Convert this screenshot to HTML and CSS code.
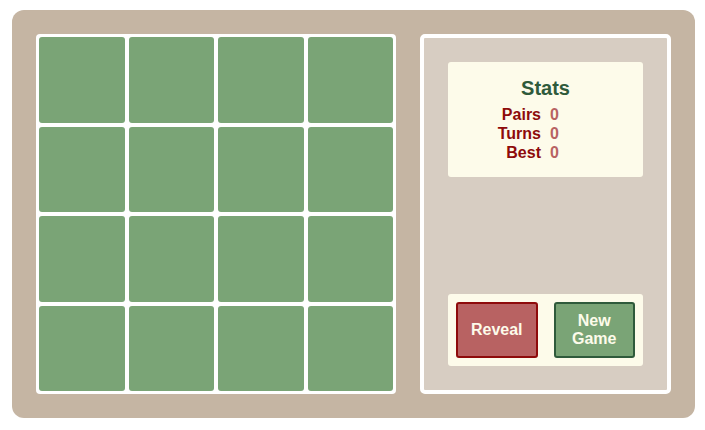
FILE: index.html
```html
<!DOCTYPE html>
<html>
<head>
<meta charset="utf-8">
<link rel="stylesheet" href="styles.css">
</head>
<body>
<div class="game">
  <div class="board">
    <div class="tile"></div><div class="tile"></div><div class="tile"></div><div class="tile"></div>
    <div class="tile"></div><div class="tile"></div><div class="tile"></div><div class="tile"></div>
    <div class="tile"></div><div class="tile"></div><div class="tile"></div><div class="tile"></div>
    <div class="tile"></div><div class="tile"></div><div class="tile"></div><div class="tile"></div>
  </div>
  <div class="panel">
    <div class="stats">
      <h2 class="stats-title">Stats</h2>
      <div class="stats-grid">
        <span class="label">Pairs</span><span class="value">0</span>
        <span class="label">Turns</span><span class="value">0</span>
        <span class="label">Best</span><span class="value">0</span>
      </div>
    </div>
    <div class="controls">
      <button class="btn btn-reveal">Reveal</button>
      <button class="btn btn-new">New Game</button>
    </div>
  </div>
</div>
</body>
</html>
```

FILE: styles.css
```css
html, body {
  margin: 0;
  background: #ffffff;
}
body {
  padding: 10px 10px 0 12px;
  font-family: "Liberation Sans", Arial, sans-serif;
}
.game {
  width: 683px;
  height: 408px;
  box-sizing: border-box;
  background: #c5b5a3;
  border-radius: 12px;
  padding: 24px;
  display: flex;
  gap: 24px;
}
.board {
  width: 360px;
  height: 360px;
  box-sizing: border-box;
  background: #ffffff;
  border-radius: 4px;
  padding: 3px;
  display: grid;
  grid-template-columns: repeat(4, 1fr);
  grid-template-rows: repeat(4, 1fr);
  gap: 4px;
}
.tile {
  background: #7aa476;
  border-radius: 3px;
}
.panel {
  flex: 1;
  box-sizing: border-box;
  background: #d7cdc2;
  border: 4px solid #ffffff;
  border-radius: 5px;
  padding: 24px;
  display: flex;
  flex-direction: column;
  justify-content: space-between;
}
.stats {
  background: #fdfbea;
  border-radius: 3px;
  height: 115px;
  box-sizing: border-box;
  padding-top: 14px;
}
.stats-title {
  margin: 0 0 5px;
  text-align: center;
  font-size: 20px;
  line-height: 24px;
  font-weight: bold;
  color: #2f5a3b;
}
.stats-grid {
  display: grid;
  grid-template-columns: 1fr 1fr;
  column-gap: 9px;
  font-size: 16px;
  line-height: 19px;
  font-weight: bold;
}
.label {
  text-align: right;
  color: #8e0b0b;
}
.value {
  text-align: left;
  color: #b86262;
}
.controls {
  background: #fdfbea;
  border-radius: 3px;
  padding: 8px;
  height: 72px;
  box-sizing: border-box;
  display: flex;
  gap: 16px;
}
.btn {
  flex: 1;
  margin: 0;
  padding: 0 10px;
  border-radius: 3px;
  font-family: "Liberation Sans", Arial, sans-serif;
  font-size: 16px;
  line-height: 18px;
  font-weight: bold;
  color: #fdfbea;
  cursor: pointer;
}
.btn-reveal {
  background: #b86262;
  border: 2px solid #8e0b0b;
}
.btn-new {
  background: #7aa476;
  border: 2px solid #2f5a3b;
}
```
